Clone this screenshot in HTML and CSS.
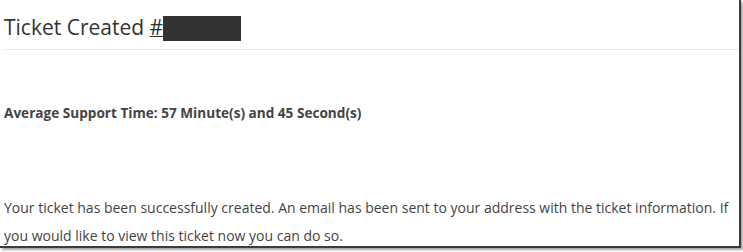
FILE: index.html
```html
<!DOCTYPE html>
<html>
<head>
<meta charset="utf-8">
<link rel="stylesheet" href="styles.css">
</head>
<body>
<div class="frame">
  <div class="header">
    <h1 class="title">Ticket Created <a class="ticket-link" href="#">#<span class="redact"></span></a></h1>
  </div>
  <p class="avg">Average Support Time: 57 Minute(s) and 45 Second(s)</p>
  <p class="msg">Your ticket has been successfully created. An email has been sent to your address with the ticket information. If you would like to view this ticket now you can do so.</p>
</div>
</body>
</html>
```
FILE: styles.css
```css
html, body {
  margin: 0;
  padding: 0;
  background: #fff;
}
body {
  width: 743px;
  height: 252px;
  overflow: hidden;
}
.frame {
  box-sizing: border-box;
  width: 741px;
  height: 248px;
  border-right: 2px solid #3c3c3c;
  border-bottom: 2px solid #3c3c3c;
  box-shadow: 2px 2px 2px rgba(0,0,0,0.35);
  padding: 0 0 0 4px;
  font-family: "Open Sans", "Liberation Sans", sans-serif;
  color: #444;
}
.header {
  border-bottom: 1px solid #ececec;
  height: 49px;
}
.title {
  margin: 0;
  padding-top: 12px;
  font-weight: normal;
  font-size: 21px;
  line-height: 30px;
  color: #333;
}
.ticket-link {
  color: #333;
  text-decoration: underline;
  text-decoration-thickness: 1px;
}
.redact {
  display: inline-block;
  width: 78px;
  height: 25px;
  background: #333;
  vertical-align: -6px;
}
.avg {
  margin: 53px 0 0;
  font-weight: bold;
  font-size: 13.6px;
  line-height: 20px;
}
.msg {
  margin: 71px 0 0;
  font-size: 14px;
  line-height: 28px;
}
```
